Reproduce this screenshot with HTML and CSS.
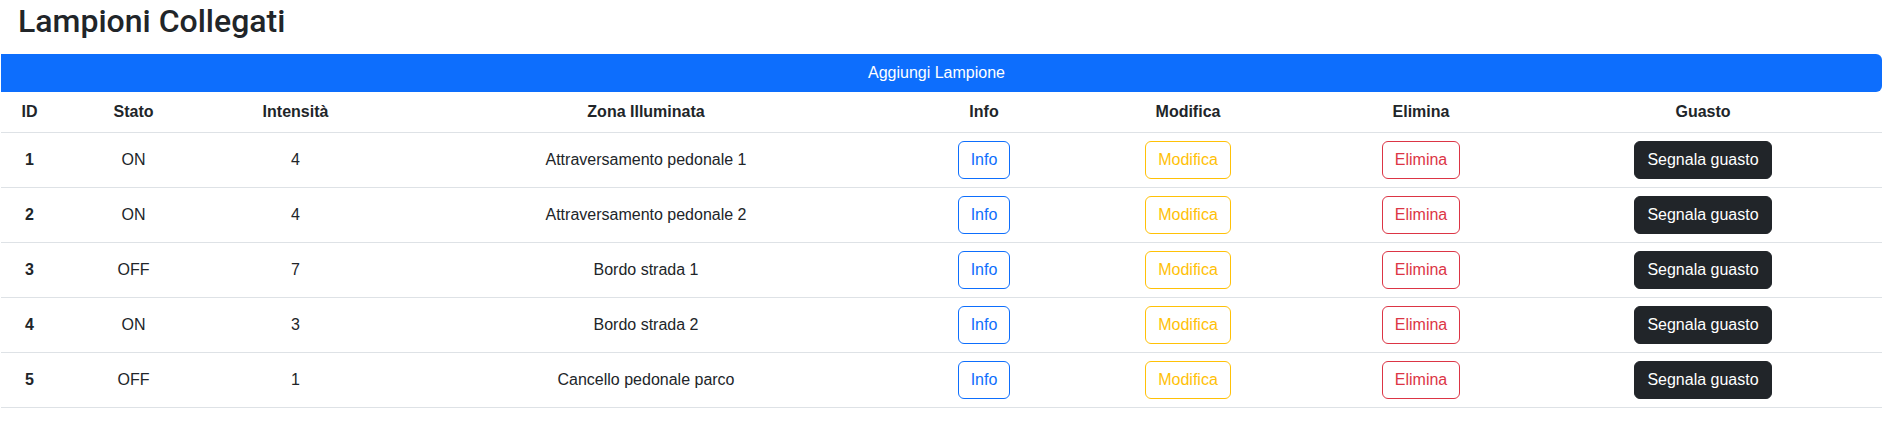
FILE: index.html
```html
<!DOCTYPE html>
<html lang="it">
<head>
<meta charset="utf-8">
<title>Lampioni Collegati</title>
<link rel="stylesheet" href="styles.css">
</head>
<body>
<h2 class="title">Lampioni Collegati</h2>
<button class="add-btn" type="button">Aggiungi Lampione</button>
<table class="grid">
  <colgroup>
    <col class="c-id"><col class="c-stato"><col class="c-int"><col class="c-zona">
    <col class="c-info"><col class="c-mod"><col class="c-del"><col class="c-guasto">
  </colgroup>
  <thead>
    <tr><th>ID</th><th>Stato</th><th>Intensità</th><th>Zona Illuminata</th><th>Info</th><th>Modifica</th><th>Elimina</th><th>Guasto</th></tr>
  </thead>
  <tbody>
    <tr><th>1</th><td>ON</td><td>4</td><td>Attraversamento pedonale 1</td>
      <td><button class="btn btn-info">Info</button></td><td><button class="btn btn-mod">Modifica</button></td><td><button class="btn btn-del">Elimina</button></td><td><button class="btn btn-dark">Segnala guasto</button></td></tr>
    <tr><th>2</th><td>ON</td><td>4</td><td>Attraversamento pedonale 2</td>
      <td><button class="btn btn-info">Info</button></td><td><button class="btn btn-mod">Modifica</button></td><td><button class="btn btn-del">Elimina</button></td><td><button class="btn btn-dark">Segnala guasto</button></td></tr>
    <tr><th>3</th><td>OFF</td><td>7</td><td>Bordo strada 1</td>
      <td><button class="btn btn-info">Info</button></td><td><button class="btn btn-mod">Modifica</button></td><td><button class="btn btn-del">Elimina</button></td><td><button class="btn btn-dark">Segnala guasto</button></td></tr>
    <tr><th>4</th><td>ON</td><td>3</td><td>Bordo strada 2</td>
      <td><button class="btn btn-info">Info</button></td><td><button class="btn btn-mod">Modifica</button></td><td><button class="btn btn-del">Elimina</button></td><td><button class="btn btn-dark">Segnala guasto</button></td></tr>
    <tr><th>5</th><td>OFF</td><td>1</td><td>Cancello pedonale parco</td>
      <td><button class="btn btn-info">Info</button></td><td><button class="btn btn-mod">Modifica</button></td><td><button class="btn btn-del">Elimina</button></td><td><button class="btn btn-dark">Segnala guasto</button></td></tr>
  </tbody>
</table>
</body>
</html>
```
FILE: styles.css
```css
* { box-sizing: border-box; }
body {
  margin: 0;
  font-family: "Liberation Sans", Arial, sans-serif;
  font-size: 16px;
  line-height: 1.5;
  color: #212529;
  background: #fff;
}
.title {
  margin: 0 0 14px;
  padding: 2px 0 0 18px;
  font-family: Roboto, "Liberation Sans", sans-serif;
  font-size: 32px;
  font-weight: 500;
  line-height: 1.2;
  color: #212529;
}
.add-btn {
  display: block;
  margin: 0 0 0 1px;
  width: 1881px;
  height: 38px;
  padding: 0 10px 0 0;
  border: 0;
  border-radius: 0 6px 6px 0;
  background: #0d6efd;
  color: #fff;
  font: inherit;
  font-size: 16px;
  line-height: 38px;
  text-align: center;
}
.grid {
  margin-left: 1px;
  width: 1881px;
  table-layout: fixed;
  border-collapse: collapse;
}
.c-id { width: 57px; }
.c-stato { width: 151px; }
.c-int { width: 173px; }
.c-zona { width: 528px; }
.c-info { width: 148px; }
.c-mod { width: 260px; }
.c-del { width: 206px; }
.c-guasto { width: 358px; }
.grid th, .grid td {
  padding: 8px;
  text-align: center;
  vertical-align: middle;
  border-bottom: 1px solid #dee2e6;
  line-height: 24px;
}
.grid th { font-weight: 700; }
.grid td { font-weight: 400; }
.btn {
  display: inline-block;
  padding: 6px 12px;
  font: inherit;
  font-size: 16px;
  line-height: 24px;
  border: 1px solid transparent;
  border-radius: 6px;
  background: transparent;
  cursor: pointer;
}
.btn-info { color: #0d6efd; border-color: #0d6efd; }
.btn-mod { color: #ffc107; border-color: #ffc107; }
.btn-del { color: #dc3545; border-color: #dc3545; }
.btn-dark { color: #fff; background: #212529; border-color: #212529; }
```
